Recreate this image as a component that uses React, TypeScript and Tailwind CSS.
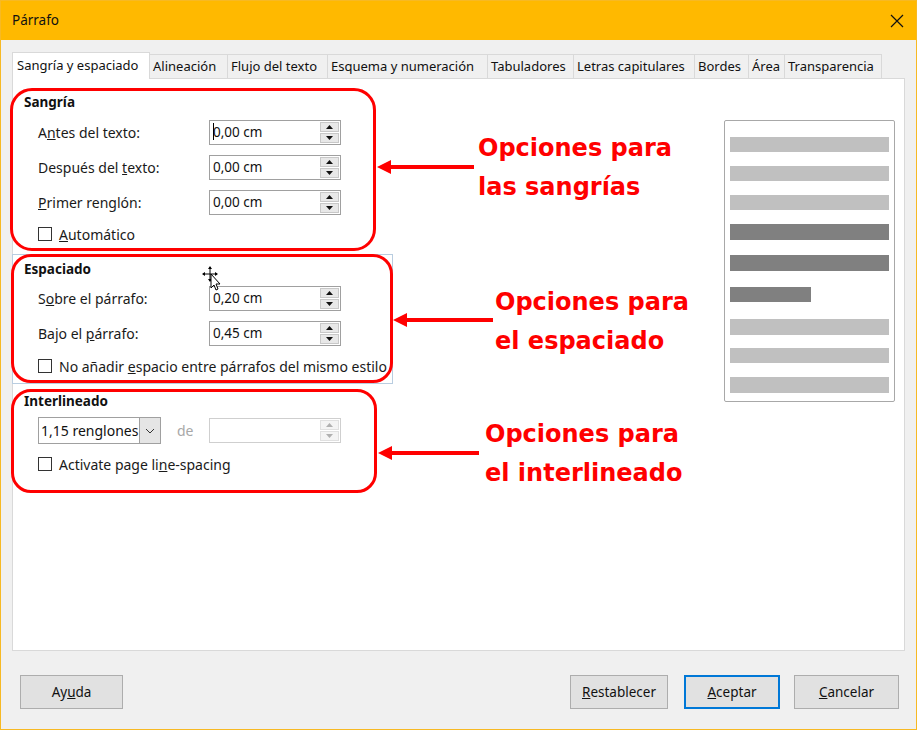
import React from "react";

const Spin = ({ disabled = false }: { disabled?: boolean }) => (
  <div className="flex flex-col w-[20px] h-full py-[1px] pr-[1px] gap-[1px]">
    <div className={`flex-1 flex items-center justify-center border ${disabled ? "border-[#e0e0e0] bg-[#f4f4f4]" : "border-[#c8c8c8] bg-[#e8e8e8]"}`}>
      <svg width="7" height="4" viewBox="0 0 7 4"><path d="M0 4 L3.5 0 L7 4 Z" fill={disabled ? "#b0b0b0" : "#111"} /></svg>
    </div>
    <div className={`flex-1 flex items-center justify-center border ${disabled ? "border-[#e0e0e0] bg-[#f4f4f4]" : "border-[#c8c8c8] bg-[#e8e8e8]"}`}>
      <svg width="7" height="4" viewBox="0 0 7 4"><path d="M0 0 L3.5 4 L7 0 Z" fill={disabled ? "#b0b0b0" : "#111"} /></svg>
    </div>
  </div>
);

const NumField = ({ value, caret = false }: { value: string; caret?: boolean }) => (
  <div className="w-[132px] h-[25px] border border-[#a0a0a0] bg-white flex items-center justify-between">
    <span className="pl-[3px] text-[13.5px] text-[#111] leading-none relative">
      {caret && <span className="absolute left-[3px] top-[-3px] w-[1px] h-[17px] bg-black" />}
      {value}
    </span>
    <Spin />
  </div>
);

const Row = ({ label, value, caret = false }: { label: React.ReactNode; value: string; caret?: boolean }) => (
  <div className="flex items-center h-[25px]">
    <div className="w-[171px] text-[14px] text-[#1a1a1a]">{label}</div>
    <NumField value={value} caret={caret} />
  </div>
);

const Check = ({ children }: { children: React.ReactNode }) => (
  <div className="flex items-center h-[18px] gap-[7px]">
    <div className="w-[14px] h-[14px] border border-[#333] bg-white" />
    <span className="text-[14px] text-[#1a1a1a]">{children}</span>
  </div>
);

const tabs: [string, string][] = [
  ["Alineación", "w-[78px]"],
  ["Flujo del texto", "w-[100px]"],
  ["Esquema y numeración", "w-[160px]"],
  ["Tabuladores", "w-[86px]"],
  ["Letras capitulares", "w-[121px]"],
  ["Bordes", "w-[54px]"],
  ["Área", "w-[36px]"],
  ["Transparencia", "w-[97px]"],
];

const Btn = ({ children, w, primary = false }: { children: React.ReactNode; w: string; primary?: boolean }) => (
  <div
    className={`${w} h-[34px] flex items-center justify-center bg-[#e1e1e1] text-[13.5px] text-[#111] ${
      primary ? "border-2 border-[#0078d7]" : "border border-[#adadad]"
    }`}
  >
    {children}
  </div>
);

const Arrow = ({ left, top, width }: { left: string; top: string; width: number }) => (
  <svg className={`absolute ${left} ${top}`} width={width} height="16" viewBox={`0 0 ${width} 16`}>
    <line x1="12" y1="8" x2={width} y2="8" stroke="#ff0000" strokeWidth="4" />
    <path d="M0 8 L14 1 L14 15 Z" fill="#ff0000" />
  </svg>
);

export default function App() {
  return (
    <div className="relative w-[917px] h-[730px] bg-[#f0f0f0] border border-[#f7b924] flex flex-col font-['Noto_Sans',_'Open_Sans',_sans-serif] overflow-hidden">
      {/* Title bar */}
      <div className="h-[39px] bg-[#ffb900] flex items-center justify-between pl-[11px] pr-[12px] shrink-0">
        <span className="text-[13.5px] text-[#111]">Párrafo</span>
        <svg width="14" height="14" viewBox="0 0 14 14">
          <path d="M1 1 L13 13 M13 1 L1 13" stroke="#111" strokeWidth="1.2" />
        </svg>
      </div>

      <div className="flex-1 flex flex-col px-[11px] pt-[12px]">
        {/* Tabs */}
        <div className="h-[26px] flex items-end relative z-10">
          <div className="w-[138px] h-[27px] mb-[-1px] bg-white border border-[#d9d9d9] border-b-0 flex items-center pl-[4px] text-[13px] text-[#111]">
            Sangría y espaciado
          </div>
          {tabs.map(([t, w]) => (
            <div
              key={t}
              className={`${w} h-[24px] bg-[#f0f0f0] border border-[#d9d9d9] border-l-0 border-b-0 flex items-center pl-[3px] text-[13px] text-[#111] whitespace-nowrap`}
            >
              {t}
            </div>
          ))}
        </div>

        {/* Panel */}
        <div className="w-[893px] h-[573px] bg-white border border-[#d9d9d9] flex">
          <div className="flex-1 flex flex-col pl-[11px] pt-[14px]">
            <div className="h-[18px] text-[13.5px] font-bold text-[#111] leading-[18px]">Sangría</div>
            <div className="mt-[9px] pl-[14px] flex flex-col gap-[10px]">
              <Row label={<>A<u>n</u>tes del texto:</>} value="0,00 cm" caret />
              <Row label={<>Después del <u>t</u>exto:</>} value="0,00 cm" />
              <Row label={<><u>P</u>rimer renglón:</>} value="0,00 cm" />
            </div>
            <div className="mt-[10px] pl-[14px]">
              <Check><u>A</u>utomático</Check>
            </div>

            <div className="mt-[17px] h-[18px] text-[13.5px] font-bold text-[#111] leading-[18px]">Espaciado</div>
            <div className="mt-[8px] pl-[14px] flex flex-col gap-[10px]">
              <Row label={<>S<u>o</u>bre el párrafo:</>} value="0,20 cm" />
              <Row label={<>Bajo el <u>p</u>árrafo:</>} value="0,45 cm" />
            </div>
            <div className="mt-[11px] pl-[14px]">
              <Check>No añadir <u>e</u>spacio entre párrafos del mismo estilo</Check>
            </div>

            <div className="mt-[17px] h-[18px] text-[13.5px] font-bold text-[#111] leading-[18px]">Interlineado</div>
            <div className="mt-[7px] pl-[14px] flex items-center h-[27px]">
              <div className="w-[123px] h-[27px] border border-[#a0a0a0] bg-white flex items-center justify-between">
                <span className="pl-[2px] text-[14px] text-[#111] whitespace-nowrap">1,15 renglones</span>
                <div className="w-[21px] h-full bg-[#e5e5e5] border-l border-[#a0a0a0] flex items-center justify-center">
                  <svg width="10" height="6" viewBox="0 0 10 6"><path d="M1 1 L5 5 L9 1" stroke="#333" strokeWidth="1" fill="none" /></svg>
                </div>
              </div>
              <span className="ml-[16px] text-[14px] text-[#a8a8a8]">de</span>
              <div className="ml-[15px] w-[132px] h-[25px] border border-[#cfcfcf] bg-white flex justify-end">
                <Spin disabled />
              </div>
            </div>
            <div className="mt-[11px] pl-[14px]">
              <Check>Activate page li<u>n</u>e-spacing</Check>
            </div>
          </div>

          {/* Preview */}
          <div className="mt-[41px] mr-[9px] w-[171px] h-[282px] border border-[#a8a8a8] rounded-[2px] bg-white flex flex-col pl-[5px]">
            <div className="mt-[16px] w-[159px] h-[15px] bg-[#c0c0c0]" />
            <div className="mt-[14px] w-[159px] h-[15px] bg-[#c0c0c0]" />
            <div className="mt-[14px] w-[159px] h-[15px] bg-[#c0c0c0]" />
            <div className="mt-[14px] w-[159px] h-[16px] bg-[#808080]" />
            <div className="mt-[15px] w-[159px] h-[16px] bg-[#808080]" />
            <div className="mt-[16px] w-[81px] h-[15px] bg-[#808080]" />
            <div className="mt-[17px] w-[159px] h-[16px] bg-[#c0c0c0]" />
            <div className="mt-[13px] w-[159px] h-[15px] bg-[#c0c0c0]" />
            <div className="mt-[14px] w-[159px] h-[16px] bg-[#c0c0c0]" />
          </div>
        </div>

        {/* Buttons */}
        <div className="mt-[24px] flex items-center pl-[8px] pr-[6px]">
          <Btn w="w-[103px]">Ay<u>u</u>da</Btn>
          <div className="flex-1" />
          <Btn w="w-[98px]"><u>R</u>establecer</Btn>
          <div className="w-[16px]" />
          <Btn w="w-[96px]" primary><u>A</u>ceptar</Btn>
          <div className="w-[14px]" />
          <Btn w="w-[105px]"><u>C</u>ancelar</Btn>
        </div>
      </div>

      {/* Annotation overlays */}
      <div className="absolute left-[9px] top-[87px] w-[366px] h-[163px] border-[3px] border-[#ff0000] rounded-[22px]" />
      <div className="absolute left-[11px] top-[253px] w-[381px] h-[130px] border border-[#b9cde0]" />
      <div className="absolute left-[10px] top-[253px] w-[382px] h-[129px] border-[3px] border-[#ff0000] rounded-[20px]" />
      <div className="absolute left-[10px] top-[388px] w-[366px] h-[104px] border-[3px] border-[#ff0000] rounded-[20px]" />

      <Arrow left="left-[376px]" top="top-[158px]" width={97} />
      <Arrow left="left-[392px]" top="top-[311px]" width={100} />
      <Arrow left="left-[377px]" top="top-[444px]" width={101} />

      <div className="absolute left-[477px] top-[128px] text-[24px] leading-[39px] font-bold text-[#ff0000] font-['DejaVu_Sans',_sans-serif]">
        <div>Opciones para</div>
        <div>las sangrías</div>
      </div>
      <div className="absolute left-[494px] top-[282px] text-[24px] leading-[39px] font-bold text-[#ff0000] font-['DejaVu_Sans',_sans-serif]">
        <div>Opciones para</div>
        <div>el espaciado</div>
      </div>
      <div className="absolute left-[484px] top-[414px] text-[24px] leading-[39px] font-bold text-[#ff0000] font-['DejaVu_Sans',_sans-serif]">
        <div>Opciones para</div>
        <div>el interlineado</div>
      </div>

      {/* Move cursor */}
      <svg className="absolute left-[200px] top-[265px]" width="22" height="26" viewBox="0 0 22 26">
        <path d="M9 1 L9 15 M2 8 L16 8" stroke="#000" strokeWidth="1" />
        <path d="M9 0 L7 3 L11 3 Z M9 16 L7 13 L11 13 Z M1 8 L4 6 L4 10 Z M17 8 L14 6 L14 10 Z" fill="#000" />
        <path d="M10 8 L10 22 L13 19 L15 24 L17 23 L15 18 L19 18 Z" fill="#fff" stroke="#000" strokeWidth="1" />
      </svg>
    </div>
  );
}
